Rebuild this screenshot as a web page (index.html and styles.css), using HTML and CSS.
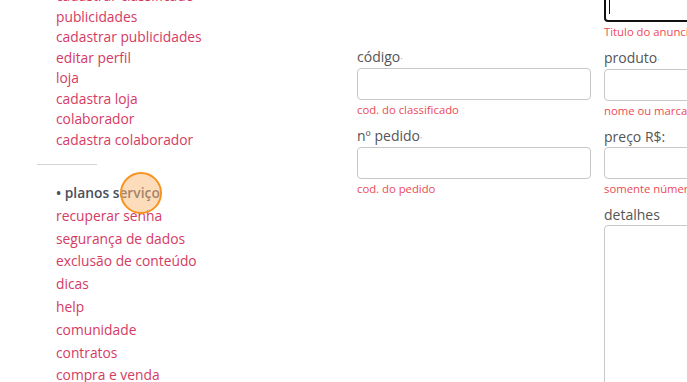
FILE: index.html
```html
<!DOCTYPE html>
<html lang="pt-BR">
<head>
    <meta charset="UTF-8">
    <meta name="viewport" content="width=device-width, initial-scale=1.0">
    <title>Painel</title>
    <link rel="stylesheet" href="styles.css">
</head>
<body>
    <div class="page">
        <aside class="sidebar">
            <ul class="menu">
                <li><a href="#">cadastrar classificado</a></li>
                <li><a href="#">publicidades</a></li>
                <li><a href="#">cadastrar publicidades</a></li>
                <li><a href="#">editar perfil</a></li>
                <li><a href="#">loja</a></li>
                <li><a href="#">cadastra loja</a></li>
                <li><a href="#">colaborador</a></li>
                <li><a href="#">cadastra colaborador</a></li>
            </ul>
            <hr class="divider">
            <ul class="menu menu-lower">
                <li class="current">
                    • planos serviço
                    <span class="touch"></span>
                </li>
                <li><a href="#">recuperar senha</a></li>
                <li><a href="#">segurança de dados</a></li>
                <li><a href="#">exclusão de conteúdo</a></li>
                <li><a href="#">dicas</a></li>
                <li><a href="#">help</a></li>
                <li><a href="#">comunidade</a></li>
                <li><a href="#">contratos</a></li>
                <li><a href="#">compra e venda</a></li>
            </ul>
        </aside>

        <main class="form">
            <div class="col col-left">
                <div class="field">
                    <label>código<span class="req">·</span></label>
                    <input type="text">
                    <small>cod. do classificado</small>
                </div>
                <div class="field">
                    <label>nº pedido<span class="req">·</span></label>
                    <input type="text">
                    <small>cod. do pedido</small>
                </div>
            </div>
            <div class="col col-right">
                <div class="field">
                    <label>título<span class="req">·</span></label>
                    <div class="input focused"><span class="caret"></span></div>
                    <small>Titulo do anuncio</small>
                </div>
                <div class="field">
                    <label>produto<span class="req">·</span></label>
                    <input type="text">
                    <small>nome ou marca</small>
                </div>
                <div class="field">
                    <label>preço R$:</label>
                    <input type="text">
                    <small>somente números</small>
                </div>
                <div class="field">
                    <label>detalhes</label>
                    <textarea></textarea>
                </div>
            </div>
        </main>
    </div>
</body>
</html>
```

FILE: styles.css
```css
html, body {
    margin: 0;
    height: 100%;
    overflow: hidden;
}
body {
    font-family: "Open Sans", "Noto Sans", sans-serif;
    background-color: #fff;
    color: #555;
}
.page {
    display: flex;
}
.sidebar {
    width: 357px;
    flex-shrink: 0;
}
.menu {
    list-style: none;
    margin: -14px 0 0;
    padding: 0 0 0 56px;
    font-size: 13.8px;
    line-height: 20.5px;
}
.menu a {
    color: #d43b63;
    text-decoration: none;
}
.divider {
    width: 60px;
    margin: 14px 0 18px 37px;
    border: 0;
    border-top: 1px solid #d4d4d4;
}
.menu-lower {
    margin-top: -1px;
    line-height: 22.8px;
}
.current {
    position: relative;
    color: #4a4f5a;
    font-weight: 600;
}
.touch {
    position: absolute;
    left: 64px;
    top: -10px;
    width: 38px;
    height: 38px;
    border-radius: 50%;
    border: 2px solid #f7931e;
    background: rgba(252, 186, 120, 0.5);
}
.form {
    display: flex;
    gap: 13px;
}
.col {
    width: 234px;
    flex-shrink: 0;
    display: flex;
    flex-direction: column;
    gap: 9px;
}
.col-left {
    padding-top: 47px;
}
.col-right {
    margin-top: -31px;
}
.field {
    display: flex;
    flex-direction: column;
}
.field label {
    font-size: 14px;
    line-height: 20px;
    color: #555;
}
.req {
    color: #bbb;
    font-size: 10px;
}
.field input,
.field .input,
.field textarea {
    box-sizing: border-box;
    width: 100%;
    height: 32px;
    margin: 0 0 3px;
    border: 1px solid #c8c8c8;
    border-radius: 4px;
    background: #fff;
    font: inherit;
}
.field .input.focused {
    border: 2px solid #111;
    display: flex;
    align-items: center;
    padding-left: 3px;
}
.caret {
    width: 1px;
    height: 15px;
    background: #111;
}
.field textarea {
    height: 200px;
    resize: none;
}
.field small {
    font-size: 11.3px;
    line-height: 14px;
    color: #ec4a55;
}
```
